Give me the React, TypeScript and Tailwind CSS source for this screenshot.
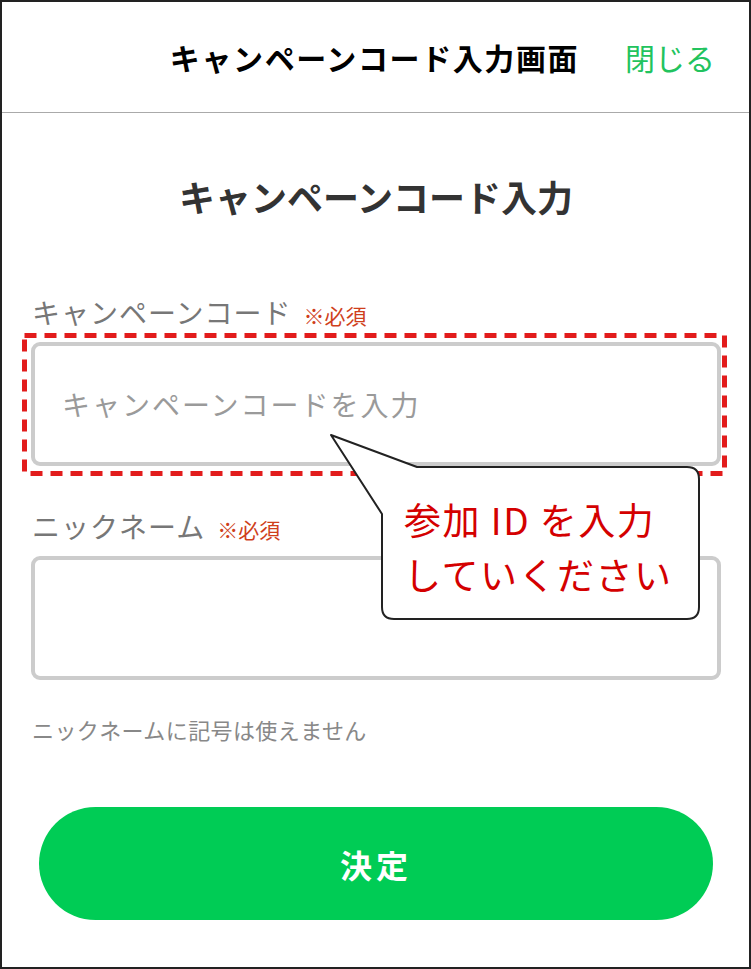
import { useState } from 'react';

const jp = { fontFamily: '"Noto Sans CJK JP", "Noto Sans", sans-serif' };

function Callout() {
  return (
    <div className="absolute left-[326px] top-[430px] w-[372px] h-[190px]">
      <svg width="372" height="190" viewBox="0 0 372 190" className="absolute left-0 top-0">
        <path
          d="M 3 3 L 89 35 L 359 35 Q 371 35 371 47 L 371 175 Q 371 187 359 187 L 66 187 Q 54 187 54 175 L 54 82 Z"
          fill="#ffffff"
          stroke="#222222"
          strokeWidth="2"
          strokeLinejoin="round"
        />
      </svg>
      <div className="absolute left-[76px] top-[60px] text-[37px] leading-[55px] text-[#d40000] tracking-[1.5px] whitespace-nowrap">
        <div>参加 ID を入力</div>
        <div>していください</div>
      </div>
    </div>
  );
}

function Field({
  label,
  placeholder,
  value,
  onChange,
  marked,
}: {
  label: string;
  placeholder?: string;
  value: string;
  onChange: (v: string) => void;
  marked?: boolean;
}) {
  return (
    <>
      <div className="flex items-baseline pl-px h-[40px] leading-[40px]">
        <span className="text-[28px] text-[#777] tracking-[1px]">{label}</span>
        <span className="ml-[12px] text-[21px] text-[#cf3f1c]">※必須</span>
      </div>
      <div className="relative mt-[10px]">
        <input
          className="block w-full h-[124px] border-[4px] border-[#cccccc] rounded-[9px] pl-[27px] text-[28px] tracking-[2px] text-[#333] placeholder:text-[#9a9a9a] outline-none bg-white"
          placeholder={placeholder}
          value={value}
          onChange={(e) => onChange(e.target.value)}
        />
        {marked && (
          <svg width="705" height="143" className="absolute -left-[9px] -top-[9px] pointer-events-none">
            <rect x="2.5" y="2.5" width="700" height="138" fill="none" stroke="#e21c1c" strokeWidth="5" strokeDasharray="12 8" />
          </svg>
        )}
      </div>
    </>
  );
}

export default function App() {
  const [code, setCode] = useState('');
  const [nickname, setNickname] = useState('');

  return (
    <div className="w-[751px] h-[969px] border-2 border-[#222] bg-white overflow-hidden" style={jp}>
      <div className="relative w-full h-full">
        <header className="relative h-[111px] border-b border-[#aaaaaa] flex items-center justify-center">
          <h1 className="text-[30px] font-bold text-black tracking-[1.6px] translate-x-[-1px]">キャンペーンコード入力画面</h1>
          <button className="absolute right-[34px] top-1/2 -translate-y-1/2 text-[30px] text-[#22c35e]">閉じる</button>
        </header>

        <div className="pl-[29px] pr-[28px]">
          <h2 className="mt-[59px] h-[48px] leading-[48px] text-center text-[36px] font-bold text-[#333]">
            キャンペーンコード入力
          </h2>

          <div className="mt-[72px]">
            <Field label="キャンペーンコード" placeholder="キャンペーンコードを入力" value={code} onChange={setCode} marked />
          </div>

          <div className="mt-[40px]">
            <Field label="ニックネーム" value={nickname} onChange={setNickname} />
          </div>

          <p className="mt-[34px] pl-px h-[30px] leading-[30px] text-[22px] tracking-[0.4px] text-[#888]">ニックネームに記号は使えません</p>

          <button className="mt-[63px] ml-[8px] w-[674px] h-[113px] rounded-full bg-[#00cc55] text-white text-[32px] font-bold tracking-[4px]">
            決定
          </button>
        </div>

        <Callout />
      </div>
    </div>
  );
}
